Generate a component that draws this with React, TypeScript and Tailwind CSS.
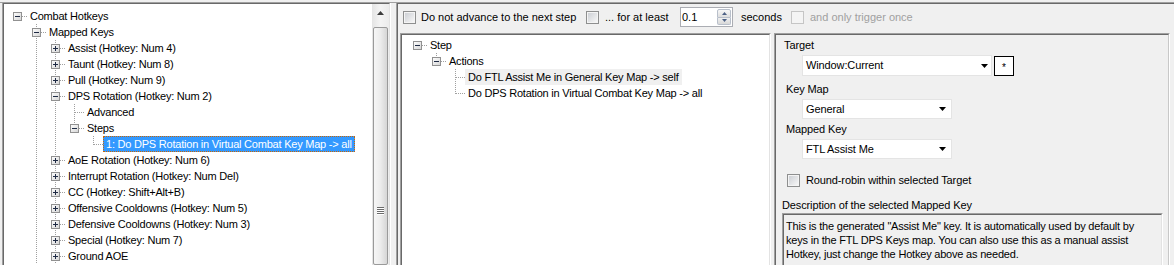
import React from 'react';

type V = 'n' | 'f' | 't';
type Row = { cols: V[]; exp?: 'p' | 'm'; label: string; sel?: 'focus' | 'inactive' };

function TreeCell({ v, own, exp }: { v: V; own: boolean; exp?: 'p' | 'm' }) {
  return (
    <svg width="19" height="16" className="block shrink-0" shapeRendering="crispEdges">
      {v === 'f' && <line x1="9.5" y1="0" x2="9.5" y2="16" stroke="#a0a0a0" strokeDasharray="1 1" />}
      {v === 't' && <line x1="9.5" y1="0" x2="9.5" y2="9" stroke="#a0a0a0" strokeDasharray="1 1" />}
      {own && <line x1="10" y1="8.5" x2="19" y2="8.5" stroke="#a0a0a0" strokeDasharray="1 1" />}
      {own && exp && (
        <g>
          <rect x="5.5" y="4.5" width="8" height="8" fill="url(#tvbox)" stroke="#919191" />
          <rect x="7" y="8" width="5" height="1" fill="#1e2a44" />
          {exp === 'p' && <rect x="9" y="6" width="1" height="5" fill="#1e2a44" />}
        </g>
      )}
    </svg>
  );
}

function TreeRow({ row }: { row: Row }) {
  const n = row.cols.length;
  let cls = 'h-[16px] px-[2px] border leading-[14px] whitespace-nowrap tracking-[-0.22px] ';
  if (row.sel === 'focus') cls += 'border-dotted border-[#cc6600] bg-[#3399ff] text-white';
  else if (row.sel === 'inactive') cls += 'border-transparent bg-[#f0f0f0]';
  else cls += 'border-transparent';
  return (
    <div className="flex h-[16px]">
      {row.cols.map((v, i) => (
        <TreeCell key={i} v={v} own={i === n - 1} exp={i === n - 1 ? row.exp : undefined} />
      ))}
      <span className={cls}>{row.label}</span>
    </div>
  );
}

const leftRows: Row[] = [
  { cols: ['n'], exp: 'm', label: 'Combat Hotkeys' },
  { cols: ['n', 'f'], exp: 'm', label: 'Mapped Keys' },
  { cols: ['n', 'f', 'f'], exp: 'p', label: 'Assist (Hotkey: Num 4)' },
  { cols: ['n', 'f', 'f'], exp: 'p', label: 'Taunt (Hotkey: Num 8)' },
  { cols: ['n', 'f', 'f'], exp: 'p', label: 'Pull (Hotkey: Num 9)' },
  { cols: ['n', 'f', 'f'], exp: 'm', label: 'DPS Rotation (Hotkey: Num 2)' },
  { cols: ['n', 'f', 'f', 'f'], label: 'Advanced' },
  { cols: ['n', 'f', 'f', 't'], exp: 'm', label: 'Steps' },
  { cols: ['n', 'f', 'f', 'n', 't'], label: '1: Do DPS Rotation in Virtual Combat Key Map -> all', sel: 'focus' },
  { cols: ['n', 'f', 'f'], exp: 'p', label: 'AoE Rotation (Hotkey: Num 6)' },
  { cols: ['n', 'f', 'f'], exp: 'p', label: 'Interrupt Rotation (Hotkey: Num Del)' },
  { cols: ['n', 'f', 'f'], exp: 'p', label: 'CC (Hotkey: Shift+Alt+B)' },
  { cols: ['n', 'f', 'f'], exp: 'p', label: 'Offensive Cooldowns (Hotkey: Num 5)' },
  { cols: ['n', 'f', 'f'], exp: 'p', label: 'Defensive Cooldowns (Hotkey: Num 3)' },
  { cols: ['n', 'f', 'f'], exp: 'p', label: 'Special (Hotkey: Num 7)' },
  { cols: ['n', 'f', 'f'], exp: 'p', label: 'Ground AOE' },
];

const midRows: Row[] = [
  { cols: ['n'], exp: 'm', label: 'Step' },
  { cols: ['n', 't'], exp: 'm', label: 'Actions' },
  { cols: ['n', 'n', 'f'], label: 'Do FTL Assist Me in General Key Map -> self', sel: 'inactive' },
  { cols: ['n', 'n', 't'], label: 'Do DPS Rotation in Virtual Combat Key Map -> all' },
];

function Check({ disabled }: { disabled?: boolean }) {
  return (
    <div
      className={
        disabled
          ? 'w-[13px] h-[13px] shrink-0 border border-[#c5c5c5] bg-[#f4f4f4] p-[1px]'
          : 'w-[13px] h-[13px] shrink-0 border border-[#8e8f8f] bg-[#f4f4f4] p-[1px]'
      }
    >
      <div
        className={
          disabled
            ? 'w-full h-full bg-[#f4f4f4]'
            : 'w-full h-full bg-linear-to-br from-[#cdd0d5] to-[#f6f6f6]'
        }
      />
    </div>
  );
}

function Arrow() {
  return (
    <svg width="7" height="4" className="block shrink-0">
      <polygon points="0,0 7,0 3.5,4" fill="#000" />
    </svg>
  );
}

export default function App() {
  return (
    <div className="w-[1174px] h-[265px] overflow-hidden bg-[#f0f0f0] text-[11px] text-black font-['Liberation_Sans',Arial,sans-serif]">
      <svg width="0" height="0" className="absolute">
        <defs>
          <linearGradient id="tvbox" x1="0" y1="0" x2="1" y2="1">
            <stop offset="0" stopColor="#ffffff" />
            <stop offset="1" stopColor="#d4d4d4" />
          </linearGradient>
        </defs>
      </svg>
      <div className="mt-[2px] h-[263px] border-t border-[#a0a0a0] flex">
        {/* Left tree */}
        <div className="ml-[2px] w-[389px] h-full border-l border-r border-l-[#a0a0a0] border-r-white">
          <div className="h-full flex border-l border-t border-r border-l-[#696969] border-t-[#696969] border-r-[#e3e3e3] bg-white">
            <div className="flex-1 pt-[4px] pl-[4px] overflow-hidden">
              {leftRows.map((r, i) => (
                <TreeRow key={i} row={r} />
              ))}
            </div>
            <div className="w-[17px] shrink-0 flex flex-col bg-linear-to-r from-[#e4e4e4] via-[#f4f4f4] to-[#ececec]">
              <div className="h-[17px] flex items-center justify-center">
                <svg width="7" height="4" className="block">
                  <polygon points="0,4 3.5,0 7,4" fill="#3c3c3c" />
                </svg>
              </div>
              <div className="mt-[6px] mx-[1px] flex-1 rounded-[2px] border border-[#9a9a9a] bg-linear-to-r from-[#f6f6f6] via-[#ececec] to-[#d6d6d6] flex justify-center pt-[179px]">
                <svg width="7" height="8" className="block">
                  <rect x="0" y="0" width="7" height="1" fill="#6a6a6a" />
                  <rect x="0" y="2" width="7" height="1" fill="#6a6a6a" />
                  <rect x="0" y="4" width="7" height="1" fill="#6a6a6a" />
                  <rect x="0" y="6" width="7" height="1" fill="#6a6a6a" />
                  <rect x="0" y="1" width="7" height="1" fill="#ffffff" />
                  <rect x="0" y="3" width="7" height="1" fill="#ffffff" />
                  <rect x="0" y="5" width="7" height="1" fill="#ffffff" />
                  <rect x="0" y="7" width="7" height="1" fill="#ffffff" />
                </svg>
              </div>
            </div>
          </div>
        </div>

        {/* splitter */}
        <div className="w-[5px] shrink-0" />

        {/* Right region */}
        <div className="flex-1 h-full border-l border-[#a0a0a0]">
          <div className="h-full border-l border-t border-[#696969] flex flex-col">
            {/* top options row */}
            <div className="h-[26px] shrink-0 flex items-center pl-[5px] leading-[13px] whitespace-nowrap">
              <Check />
              <span className="ml-[5px] w-[165px]">Do not advance to the next step</span>
              <Check />
              <span className="ml-[6px] w-[75px]">... for at least</span>
              <div className="w-[53px] h-[20px] shrink-0 bg-white border border-[#abadb3] flex">
                <span className="flex-1 pl-[1px] leading-[18px]">0.1</span>
                <div className="w-[15px] flex flex-col py-[1px] pr-[1px]">
                  <div className="flex-1 rounded-t-[2px] border border-[#b8bfca] bg-linear-to-b from-[#f8f8f8] to-[#dedede] flex items-center justify-center">
                    <svg width="5" height="3" className="block">
                      <polygon points="0,3 2.5,0 5,3" fill="#4d6185" />
                    </svg>
                  </div>
                  <div className="flex-1 rounded-b-[2px] border border-t-0 border-[#b8bfca] bg-linear-to-b from-[#f0f0f0] to-[#d8d8d8] flex items-center justify-center">
                    <svg width="5" height="3" className="block">
                      <polygon points="0,0 5,0 2.5,3" fill="#4d6185" />
                    </svg>
                  </div>
                </div>
              </div>
              <span className="ml-[8px] w-[50px]">seconds</span>
              <Check disabled />
              <span className="ml-[6px] text-[#a0a0a0]">and only trigger once</span>
            </div>

            {/* lower area */}
            <div className="mt-[3px] flex-1 flex ml-[2px]">
              {/* middle tree */}
              <div className="w-[371px] h-full shrink-0 border-l border-t border-r border-l-[#a0a0a0] border-t-[#a0a0a0] border-r-white">
                <div className="h-full border-l border-t border-r border-l-[#696969] border-t-[#696969] border-r-[#e3e3e3] bg-white pt-[2px] pl-[6px]">
                  {midRows.map((r, i) => (
                    <TreeRow key={i} row={r} />
                  ))}
                </div>
              </div>

              {/* right details panel */}
              <div className="ml-[3px] w-[396px] h-full shrink-0 border-l border-t border-r border-l-[#a0a0a0] border-t-[#a0a0a0] border-r-white">
                <div className="h-full border-l border-t border-r border-l-[#696969] border-t-[#696969] border-r-[#c8c8c8] flex flex-col leading-[13px] whitespace-nowrap tracking-[-0.12px]">
                  <div className="mt-[4px] ml-[8px]">Target</div>
                  <div className="mt-[3px] ml-[26px] flex items-start">
                    <div className="w-[190px] h-[21px] bg-white border border-[#e4e4e4] flex items-center pl-[3px] pr-[3px]">
                      <span className="flex-1">Window:Current</span>
                      <Arrow />
                    </div>
                    <div className="ml-[2px] mt-[1px] w-[20px] h-[20px] bg-white border border-black flex items-center justify-center text-[10px] leading-none pt-[3px]">
                      *
                    </div>
                  </div>
                  <div className="mt-[7px] ml-[10px]">Key Map</div>
                  <div className="mt-[3px] ml-[26px] w-[150px] h-[20px] bg-white border border-[#e4e4e4] flex items-center pl-[3px] pr-[5px]">
                    <span className="flex-1">General</span>
                    <Arrow />
                  </div>
                  <div className="mt-[4px] ml-[10px]">Mapped Key</div>
                  <div className="mt-[3px] ml-[26px] w-[150px] h-[20px] bg-white border border-[#e4e4e4] flex items-center pl-[3px] pr-[5px]">
                    <span className="flex-1">FTL Assist Me</span>
                    <Arrow />
                  </div>
                  <div className="mt-[15px] ml-[11px] flex items-center">
                    <Check />
                    <span className="ml-[6px]">Round-robin within selected Target</span>
                  </div>
                  <div className="mt-[12px] ml-[6px]">Description of the selected Mapped Key</div>
                  <div className="mt-[1px] ml-[6px] w-[381px] flex-1 border-l border-t border-r border-l-[#a0a0a0] border-t-[#a0a0a0] border-r-white">
                    <div className="h-full border-l border-t border-r border-l-[#696969] border-t-[#696969] border-r-[#e3e3e3] bg-[#f0f0f0] pl-[2px] pt-[4px] leading-[14px] tracking-[-0.2px]">
                      This is the generated "Assist Me" key. It is automatically used by default by
                      <br />
                      keys in the FTL DPS Keys map. You can also use this as a manual assist
                      <br />
                      Hotkey, just change the Hotkey above as needed.
                    </div>
                  </div>
                </div>
              </div>
            </div>
          </div>
        </div>
      </div>
    </div>
  );
}
